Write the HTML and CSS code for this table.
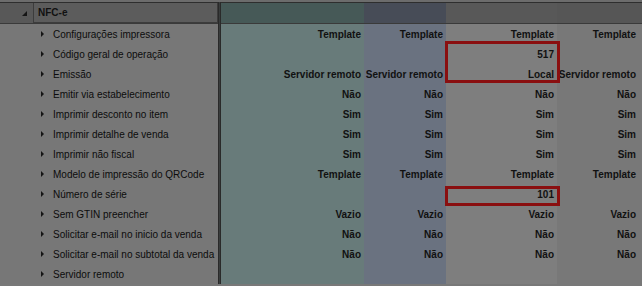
FILE: index.html
```html
<!DOCTYPE html>
<html>
<head>
<meta charset="utf-8">
<link rel="stylesheet" href="styles.css">
</head>
<body>
<div class="grid">
  <div class="topstrip"></div>
  <div class="hdr hdr-left"><span class="hdr-tri"></span><div class="hdr-box">NFC-e</div></div>
  <div class="divider"></div>
  <div class="hdr c1"></div>
  <div class="hdr c2"></div>
  <div class="hdr c3"></div>
  <div class="hdr c4"></div>

  <div class="body">
    <div class="labels">
      <div class="lab"><span class="tri"></span>Configurações impressora</div>
      <div class="lab"><span class="tri"></span>Código geral de operação</div>
      <div class="lab"><span class="tri"></span>Emissão</div>
      <div class="lab"><span class="tri"></span>Emitir via estabelecimento</div>
      <div class="lab"><span class="tri"></span>Imprimir desconto no item</div>
      <div class="lab"><span class="tri"></span>Imprimir detalhe de venda</div>
      <div class="lab"><span class="tri"></span>Imprimir não fiscal</div>
      <div class="lab"><span class="tri"></span>Modelo de impressão do QRCode</div>
      <div class="lab"><span class="tri"></span>Número de série</div>
      <div class="lab"><span class="tri"></span>Sem GTIN preencher</div>
      <div class="lab"><span class="tri"></span>Solicitar e-mail no inicio da venda</div>
      <div class="lab"><span class="tri"></span>Solicitar e-mail no subtotal da venda</div>
      <div class="lab"><span class="tri"></span>Servidor remoto</div>
    </div>
    <div class="divider"></div>
    <div class="col c1">
      <div class="v">Template</div><div class="v"></div><div class="v">Servidor remoto</div><div class="v">Não</div><div class="v">Sim</div><div class="v">Sim</div><div class="v">Sim</div><div class="v">Template</div><div class="v"></div><div class="v">Vazio</div><div class="v">Não</div><div class="v">Não</div><div class="v"></div>
    </div>
    <div class="col c2">
      <div class="v">Template</div><div class="v"></div><div class="v">Servidor remoto</div><div class="v">Não</div><div class="v">Sim</div><div class="v">Sim</div><div class="v">Sim</div><div class="v">Template</div><div class="v"></div><div class="v">Vazio</div><div class="v">Não</div><div class="v">Não</div><div class="v"></div>
    </div>
    <div class="col c3">
      <div class="v">Template</div><div class="v">517</div><div class="v">Local</div><div class="v">Não</div><div class="v">Sim</div><div class="v">Sim</div><div class="v">Sim</div><div class="v">Template</div><div class="v">101</div><div class="v">Vazio</div><div class="v">Não</div><div class="v">Não</div><div class="v"></div>
      <div class="mark mark-a"></div>
      <div class="mark mark-b"></div>
    </div>
    <div class="col c4">
      <div class="v">Template</div><div class="v"></div><div class="v">Servidor remoto</div><div class="v">Não</div><div class="v">Sim</div><div class="v">Sim</div><div class="v">Sim</div><div class="v">Template</div><div class="v"></div><div class="v">Vazio</div><div class="v">Não</div><div class="v">Não</div><div class="v"></div>
    </div>
  </div>
</div>
</body>
</html>
```
FILE: styles.css
```css
html, body {
  margin: 0;
  padding: 0;
  background: #787878;
  overflow: hidden;
}
body {
  font-family: "Liberation Sans", Arial, sans-serif;
  font-size: 10px;
  color: #111;
  width: 642px;
  height: 286px;
}
.grid {
  display: grid;
  grid-template-columns: 218px 3px 143px 82px 111px 1fr;
  grid-template-rows: 2px 22px auto;
}
.topstrip {
  grid-column: 1 / -1;
  background: #6c6c6c;
}
.hdr {
  height: 22px;
  border-top: 1px solid #2e2e2e;
  border-bottom: 1px solid #3a3a3a;
  box-sizing: border-box;
}
.hdr-left {
  background: #585858;
  display: flex;
  align-items: stretch;
  position: relative;
}
.hdr-tri {
  position: absolute;
  left: 22px;
  top: 8px;
  width: 0;
  height: 0;
  border-left: 5px solid transparent;
  border-bottom: 5px solid #151515;
}
.hdr-box {
  margin-left: 33px;
  flex: 1;
  border: 1px solid #3c3c3c;
  border-top: none;
  background: #5c5c5c;
  font-weight: bold;
  padding-left: 4px;
  display: flex;
  align-items: center;
}
.divider {
  background: #3a3d3d;
  border-left: 1px solid #2a2a2a;
  border-right: 1px solid #2a2a2a;
}
.hdr.c1 { background: #465957; }
.hdr.c2 { background: #474c57; }
.hdr.c3 { background: #585858; }
.hdr.c4 { background: #565656; }

.body {
  grid-column: 1 / -1;
  display: grid;
  grid-template-columns: 218px 3px 143px 82px 111px 1fr;
}
.labels { background: #777777; }
.lab {
  height: 20px;
  display: flex;
  align-items: center;
  padding-left: 41px;
  white-space: nowrap;
  color: #0c0c0c;
}
.tri {
  width: 0;
  height: 0;
  border-top: 3px solid transparent;
  border-bottom: 3px solid transparent;
  border-left: 3px solid #151515;
  margin-right: 9px;
}
.col { position: relative; }
.col.c1 { background: #687b7a; }
.col.c2 { background: #6a7280; }
.col.c3 { background: #7e7e7e; z-index: 1; }
.col.c4 { background: #787878; padding-right: 3px; }
.v {
  height: 20px;
  display: flex;
  align-items: center;
  justify-content: flex-end;
  padding-right: 3px;
  font-weight: bold;
  white-space: nowrap;
}
.mark {
  position: absolute;
  left: -1px;
  right: -3px;
  border: 3px solid #8a0f10;
  z-index: 2;
}
.mark-a { top: 17px; height: 36px; }
.mark-b { top: 162px; height: 14px; }
```
